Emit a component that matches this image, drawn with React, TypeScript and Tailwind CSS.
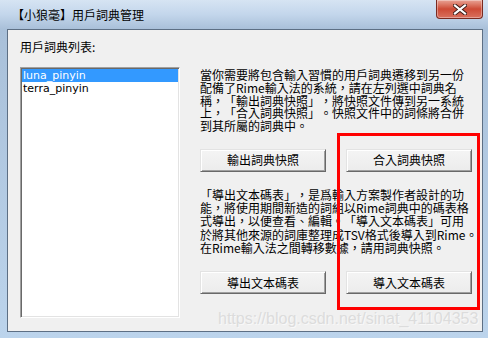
import React from "react";

const cjk = "font-['Noto_Sans_CJK_TC','Noto_Sans_CJK_SC',sans-serif] [text-spacing-trim:space-all]";

const DICTS = ["luna_pinyin", "terra_pinyin"];

function WinButton({ label }: { label: string }) {
  return (
    <button
      className={`w-[126px] h-[23px] border border-t-[#e3e3e3] border-l-[#e3e3e3] border-b-[#696969] border-r-[#696969] bg-gradient-to-b from-[#f4f4f4] to-[#ececec] shadow-[inset_1px_1px_0_#ffffff,inset_-1px_-1px_0_#a0a0a0] text-[12px] leading-[14px] text-black ${cjk}`}
    >
      {label}
    </button>
  );
}

function CloseButton() {
  return (
    <div className="mr-[5px] self-start w-[47px] h-[19px] rounded-b-[4px] border border-t-0 border-[#7a2a20] bg-gradient-to-b from-[#e8a294] via-[#cd4a35] to-[#d9705e] shadow-[inset_0_0_0_1px_rgba(255,255,255,0.35)] flex items-center justify-center">
      <svg width="14" height="11" viewBox="0 0 14 11">
        <path d="M2 1.5 L12 9.5 M12 1.5 L2 9.5" stroke="#3b1a16" strokeWidth="4" strokeLinecap="square" />
        <path d="M2 1.5 L12 9.5 M12 1.5 L2 9.5" stroke="#ffffff" strokeWidth="2.2" strokeLinecap="square" />
      </svg>
    </div>
  );
}

export default function App() {
  return (
    <div className="relative w-[488px] h-[338px] overflow-hidden flex flex-col bg-[#b9d1ea]">
      {/* title bar */}
      <div className="h-[29px] flex items-center justify-between bg-gradient-to-b from-[#d6e4f3] via-[#c3d6eb] to-[#a9c0d9]">
        <span className={`pl-[12px] text-[12px] leading-[14px] text-black ${cjk}`}>
          【小狼毫】用戶詞典管理
        </span>
        <CloseButton />
      </div>

      {/* frame + client */}
      <div className="flex-1 flex pl-[7px] pr-[5px] pb-[6px] bg-gradient-to-b from-[#a9c0d9] to-[#bcd4ec]">
        <div className={`flex-1 flex border border-[#5d6f84] bg-[#f0f0f0] pt-[10px] pl-[12px] text-black ${cjk}`}>
          {/* left column */}
          <div className="w-[160px] flex flex-col">
            <div className="h-[14px] text-[12px] leading-[14px]">用戶詞典列表:</div>
            <div className="mt-[13px] h-[251px] border border-t-[#a0a0a0] border-l-[#a0a0a0] border-b-[#ffffff] border-r-[#ffffff] shadow-[inset_1px_1px_0_#696969,inset_-1px_-1px_0_#e3e3e3] bg-white p-[1px]">
              {DICTS.map((d, i) => (
                <div
                  key={d}
                  className={`h-[13px] pl-[1px] text-[11px] leading-[13px] font-['DejaVu_Sans',sans-serif] ${
                    i === 0 ? "bg-[#3399ff] text-white" : "text-black"
                  }`}
                >
                  {d}
                </div>
              ))}
            </div>
          </div>

          {/* right column */}
          <div className="ml-[20px] w-[272px] pt-[29px] flex flex-col">
            <p className="text-[12px] leading-[12.75px] whitespace-nowrap">
              當你需要將包含輸入習慣的用戶詞典遷移到另一份
              <br />
              配備了Rime輸入法的系統，請在左列選中詞典名
              <br />
              稱，「輸出詞典快照」，將快照文件傳到另一系統
              <br />
              上，「合入詞典快照」。快照文件中的詞條將合併
              <br />
              到其所屬的詞典中。
            </p>
            <div className="mt-[16px] flex gap-[20px]">
              <WinButton label="輸出詞典快照" />
              <WinButton label="合入詞典快照" />
            </div>
            <p className="mt-[16px] text-[12px] leading-[13.3px] whitespace-nowrap">
              「導出文本碼表」，是爲輸入方案製作者設計的功
              <br />
              能，將使用期間新造的詞組以Rime詞典中的碼表格
              <br />
              式導出，以便查看、編輯。「導入文本碼表」可用
              <br />
              於將其他來源的詞庫整理成TSV格式後導入到Rime。
              <br />
              在Rime輸入法之間轉移數據，請用詞典快照。
            </p>
            <div className="mt-[17px] flex gap-[20px]">
              <WinButton label="導出文本碼表" />
              <WinButton label="導入文本碼表" />
            </div>
          </div>
        </div>
      </div>

      {/* annotation overlay */}
      <div className="absolute left-[337px] top-[133px] w-[143px] h-[177px] border-[3px] border-[#ff0000]" />
      <div className="absolute left-[218px] top-[310px] text-[16px] leading-[18px] font-['Liberation_Sans',sans-serif] text-[#dcdcdc] [text-shadow:1px_1px_0_#f8f8f8]">
        https://blog.csdn.net/sinat_41104353
      </div>
    </div>
  );
}
